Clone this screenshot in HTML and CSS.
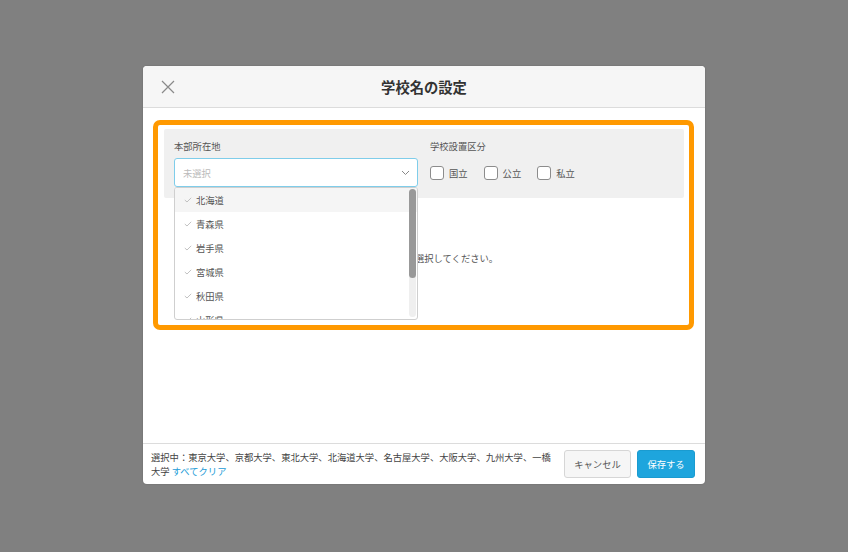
FILE: index.html
```html
<!DOCTYPE html>
<html lang="ja">
<head>
<meta charset="utf-8">
<title>学校名の設定</title>
<link rel="stylesheet" href="styles.css">
</head>
<body>
<div class="backdrop">
  <div class="modal">
    <div class="modal-header">
      <button class="close-btn" aria-label="閉じる">
        <svg width="14" height="14" viewBox="0 0 14 14"><path d="M1 1 L13 13 M13 1 L1 13" stroke="#8a8a8a" stroke-width="1.2" fill="none"/></svg>
      </button>
      <div class="modal-title">学校名の設定</div>
    </div>
    <div class="modal-body">
      <div class="filter-panel">
        <div class="filter-col">
          <div class="filter-label">本部所在地</div>
          <div class="select-wrap">
            <div class="select-box">
              <span class="placeholder">未選択</span>
              <svg class="chevron" width="9" height="6" viewBox="0 0 9 6"><path d="M1 1 L4.5 4.5 L8 1" stroke="#888" stroke-width="1" fill="none"/></svg>
            </div>
            <div class="dropdown">
              <ul class="dropdown-list">
                <li class="option active"><svg class="check" width="8" height="6" viewBox="0 0 8 6"><path d="M0.8 3 L3 5 L7.2 0.8" stroke="#bbb" stroke-width="0.9" fill="none"/></svg>北海道</li>
                <li class="option"><svg class="check" width="8" height="6" viewBox="0 0 8 6"><path d="M0.8 3 L3 5 L7.2 0.8" stroke="#bbb" stroke-width="0.9" fill="none"/></svg>青森県</li>
                <li class="option"><svg class="check" width="8" height="6" viewBox="0 0 8 6"><path d="M0.8 3 L3 5 L7.2 0.8" stroke="#bbb" stroke-width="0.9" fill="none"/></svg>岩手県</li>
                <li class="option"><svg class="check" width="8" height="6" viewBox="0 0 8 6"><path d="M0.8 3 L3 5 L7.2 0.8" stroke="#bbb" stroke-width="0.9" fill="none"/></svg>宮城県</li>
                <li class="option"><svg class="check" width="8" height="6" viewBox="0 0 8 6"><path d="M0.8 3 L3 5 L7.2 0.8" stroke="#bbb" stroke-width="0.9" fill="none"/></svg>秋田県</li>
                <li class="option"><svg class="check" width="8" height="6" viewBox="0 0 8 6"><path d="M0.8 3 L3 5 L7.2 0.8" stroke="#bbb" stroke-width="0.9" fill="none"/></svg>山形県</li>
              </ul>
              <div class="scrollbar"><div class="scroll-thumb"></div></div>
            </div>
          </div>
        </div>
        <div class="filter-col">
          <div class="filter-label">学校設置区分</div>
          <div class="check-row">
            <label class="check-item"><span class="checkbox"></span>国立</label>
            <label class="check-item"><span class="checkbox"></span>公立</label>
            <label class="check-item"><span class="checkbox"></span>私立</label>
          </div>
        </div>
      </div>
      <p class="message">絞り込み条件を選択してください。</p>
      <div class="highlight"></div>
    </div>
    <div class="modal-footer">
      <div class="selected-text">選択中：東京大学、京都大学、東北大学、北海道大学、名古屋大学、大阪大学、九州大学、一橋大学 <a class="clear-link" href="#">すべてクリア</a></div>
      <div class="footer-buttons">
        <button class="btn btn-cancel">キャンセル</button>
        <button class="btn btn-save">保存する</button>
      </div>
    </div>
  </div>
</div>
</body>
</html>
```

FILE: styles.css
```css
* { box-sizing: border-box; }
html, body { margin: 0; padding: 0; }
body {
  background: #808080;
  font-family: "Noto Sans CJK JP", "Noto Sans", sans-serif;
  color: #444;
}
.backdrop {
  width: 848px;
  height: 552px;
  display: flex;
  align-items: center;
  justify-content: center;
}
.modal {
  width: 562px;
  height: 418px;
  background: #fff;
  border-radius: 4px;
  display: flex;
  flex-direction: column;
  overflow: hidden;
  box-shadow: 0 0 2px rgba(0,0,0,0.2);
  margin-top: -2px;
}
.modal-header {
  position: relative;
  height: 42px;
  background: #f6f6f6;
  border-bottom: 1px solid #dcdcdc;
  display: flex;
  align-items: center;
  justify-content: center;
  flex-shrink: 0;
}
.close-btn {
  position: absolute;
  left: 18px;
  top: 14px;
  padding: 0;
  border: 0;
  background: none;
  width: 14px;
  height: 14px;
  display: block;
}
.close-btn svg { display: block; }
.modal-title {
  font-size: 14.3px;
  font-weight: bold;
  color: #333;
  line-height: 20px;
}
.modal-body {
  position: relative;
  flex: 1;
  padding: 21px 21px 0;
}
.filter-panel {
  background: #f0f0f0;
  border-radius: 2px;
  padding: 10px 10px 11px;
  display: grid;
  grid-template-columns: 1fr 1fr;
  column-gap: 12px;
  position: relative;
  z-index: 2;
}
.filter-label {
  font-size: 9.3px;
  line-height: 14px;
  color: #555;
  margin-bottom: 5px;
}
.select-wrap { position: relative; }
.select-box {
  height: 29px;
  background: #fff;
  border: 1px solid #7fcdea;
  border-radius: 3px;
  display: flex;
  align-items: center;
  justify-content: space-between;
  padding: 0 7px 0 8px;
}
.placeholder {
  font-size: 9.3px;
  color: #bbb;
}
.chevron { display: block; margin-top: 1px; }
.dropdown {
  position: absolute;
  left: 0;
  top: 29px;
  width: 244px;
  height: 133px;
  background: #fff;
  border: 1px solid #cfcfcf;
  border-radius: 3px;
  overflow: hidden;
}
.dropdown-list {
  list-style: none;
  margin: 0;
  padding: 0;
}
.option {
  height: 24px;
  display: flex;
  align-items: center;
  padding-left: 9px;
  font-size: 9.3px;
  color: #555;
}
.option.active { background: #f5f5f5; }
.check { display: block; margin-right: 4px; margin-top: -1px; }
.scrollbar {
  position: absolute;
  right: 1px;
  top: 1px;
  width: 7px;
  height: 128px;
  background: #efefef;
  border-radius: 4px;
}
.scroll-thumb {
  width: 7px;
  height: 89px;
  background: #999;
  border-radius: 4px;
}
.check-row {
  height: 29px;
  display: flex;
  align-items: center;
  gap: 16px;
}
.check-item {
  display: flex;
  align-items: center;
  gap: 5px;
  font-size: 9.3px;
  color: #555;
}
.checkbox {
  width: 14px;
  height: 14px;
  border: 1px solid #8c8c8c;
  border-radius: 3px;
  background: #fff;
  display: block;
}
.message {
  margin: 53px 0 0;
  text-align: center;
  font-size: 9.3px;
  line-height: 14px;
  color: #555;
}
.highlight {
  position: absolute;
  left: 10px;
  top: 12px;
  width: 541px;
  height: 210px;
  border: 5px solid #ff9900;
  border-radius: 7px;
  pointer-events: none;
  z-index: 3;
}
.modal-footer {
  height: 41px;
  border-top: 1px solid #dcdcdc;
  display: flex;
  align-items: center;
  padding: 0 10px 0 8px;
  gap: 10px;
  flex-shrink: 0;
}
.selected-text {
  flex: 1;
  font-size: 9.3px;
  line-height: 14px;
  color: #444;
}
.clear-link {
  color: #1a9bd7;
  text-decoration: none;
}
.footer-buttons {
  display: flex;
  gap: 6px;
}
.btn {
  height: 28px;
  border-radius: 3px;
  font-family: "Noto Sans CJK JP", "Noto Sans", sans-serif;
  font-size: 9.3px;
  padding: 0;
}
.btn-cancel {
  width: 67px;
  background: #f6f6f6;
  border: 1px solid #d6d6d6;
  color: #555;
}
.btn-save {
  width: 58px;
  background: #1ea5dd;
  border: 1px solid #1a9bd0;
  color: #fff;
}
```
